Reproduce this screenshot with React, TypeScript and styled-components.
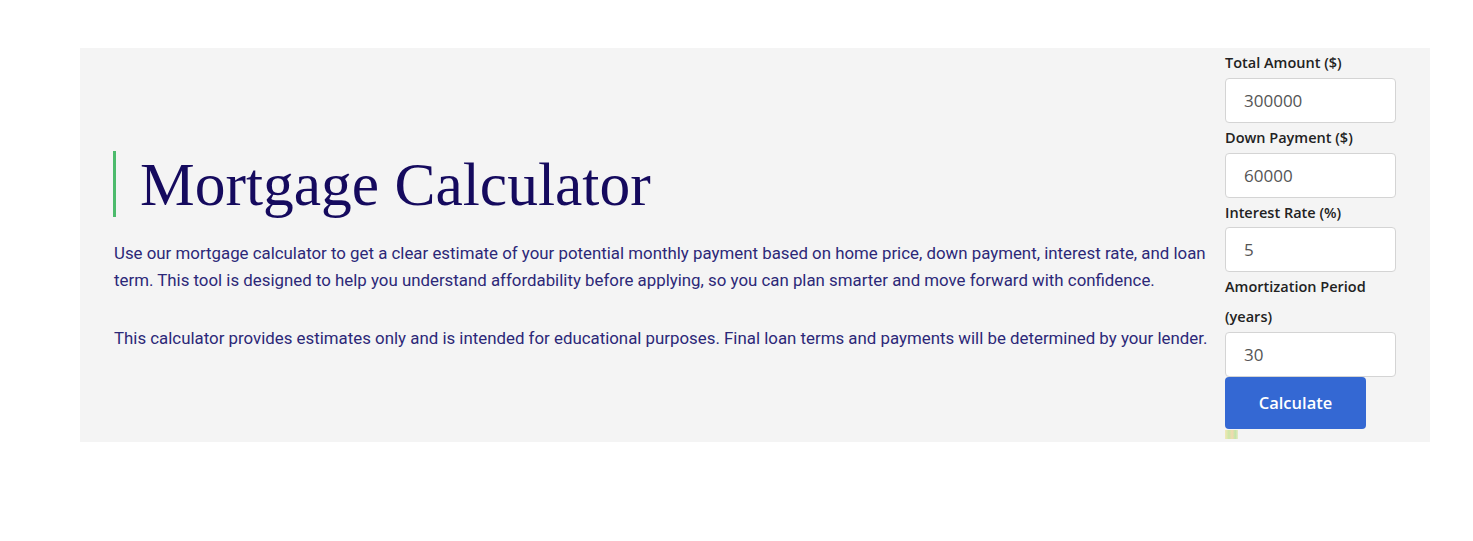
import React from "react";
import styled, { createGlobalStyle } from "styled-components";

const GlobalStyle = createGlobalStyle`
  html, body {
    margin: 0;
    padding: 0;
    background: #ffffff;
  }
  body {
    font-family: "Roboto", "Liberation Sans", sans-serif;
  }
  * { box-sizing: border-box; }
`;

const Page = styled.div`
  padding: 48px 0 0 80px;
`;

const Panel = styled.section`
  width: 1350px;
  background: #f4f4f4;
  padding: 0 34px;
  display: grid;
  grid-template-columns: 1fr 171px;
  column-gap: 10px;
  align-items: center;
`;

const Intro = styled.div`
  display: flex;
  flex-direction: column;
  padding-top: 14px;
`;

const Title = styled.h1`
  margin: 0 0 23px -1px;
  padding-left: 24px;
  border-left: 3px solid #4cbb6c;
  font-family: "Liberation Serif", "DejaVu Serif", serif;
  font-weight: 400;
  font-size: 61.5px;
  line-height: 66px;
  color: #150a5e;
`;

const Paragraph = styled.p<{ $gap?: number }>`
  margin: 0 0 ${(p) => p.$gap ?? 0}px 0;
  font-family: "Roboto", "Liberation Sans", sans-serif;
  font-size: 16.85px;
  line-height: 27px;
  color: #2c2878;
`;

const Form = styled.form`
  display: flex;
  flex-direction: column;
  align-items: flex-start;
`;

const Label = styled.label`
  font-family: "Open Sans", "Noto Sans", sans-serif;
  font-weight: 600;
  font-size: 14.5px;
  line-height: 29.75px;
  color: #222222;
`;

const Field = styled.input`
  width: 171px;
  height: 45px;
  padding: 0 18px;
  border: 1px solid #d4d4d4;
  border-radius: 4px;
  background: #ffffff;
  font-family: "Open Sans", "Noto Sans", sans-serif;
  font-size: 17px;
  color: #555555;
  outline: none;
`;

const Button = styled.button`
  width: 141px;
  height: 52px;
  border: none;
  border-radius: 4px;
  background: #3468d3;
  color: #ffffff;
  font-family: "Open Sans", "Noto Sans", sans-serif;
  font-weight: 600;
  font-size: 16.5px;
  cursor: pointer;
`;

const Spinner = styled.span`
  display: block;
  width: 13px;
  height: 9px;
  margin: 1px 0 3px 0;
  background: linear-gradient(
    90deg,
    #f4e6b0 0%,
    #c9e6a0 30%,
    #f2d6a8 55%,
    #bde4a0 80%,
    #e9e6c0 100%
  );
  opacity: 0.9;
`;

const fields = [
  { id: "total", label: "Total Amount ($)", value: "300000" },
  { id: "down", label: "Down Payment ($)", value: "60000" },
  { id: "rate", label: "Interest Rate (%)", value: "5" },
  { id: "years", label: "Amortization Period (years)", value: "30" },
];

export default function App() {
  return (
    <>
      <GlobalStyle />
      <Page>
        <Panel>
          <Intro>
            <Title>Mortgage Calculator</Title>
            <Paragraph $gap={31}>
              Use our mortgage calculator to get a clear estimate of your potential monthly payment
              based on home price, down payment, interest rate, and loan term. This tool is designed
              to help you understand affordability before applying, so you can plan smarter and move
              forward with confidence.
            </Paragraph>
            <Paragraph>
              This calculator provides estimates only and is intended for educational purposes. Final
              loan terms and payments will be determined by your lender.
            </Paragraph>
          </Intro>
          <Form onSubmit={(e) => e.preventDefault()}>
            {fields.map((f) => (
              <React.Fragment key={f.id}>
                <Label htmlFor={f.id}>{f.label}</Label>
                <Field id={f.id} type="text" defaultValue={f.value} />
              </React.Fragment>
            ))}
            <Button type="submit">Calculate</Button>
            <Spinner />
          </Form>
        </Panel>
      </Page>
    </>
  );
}
